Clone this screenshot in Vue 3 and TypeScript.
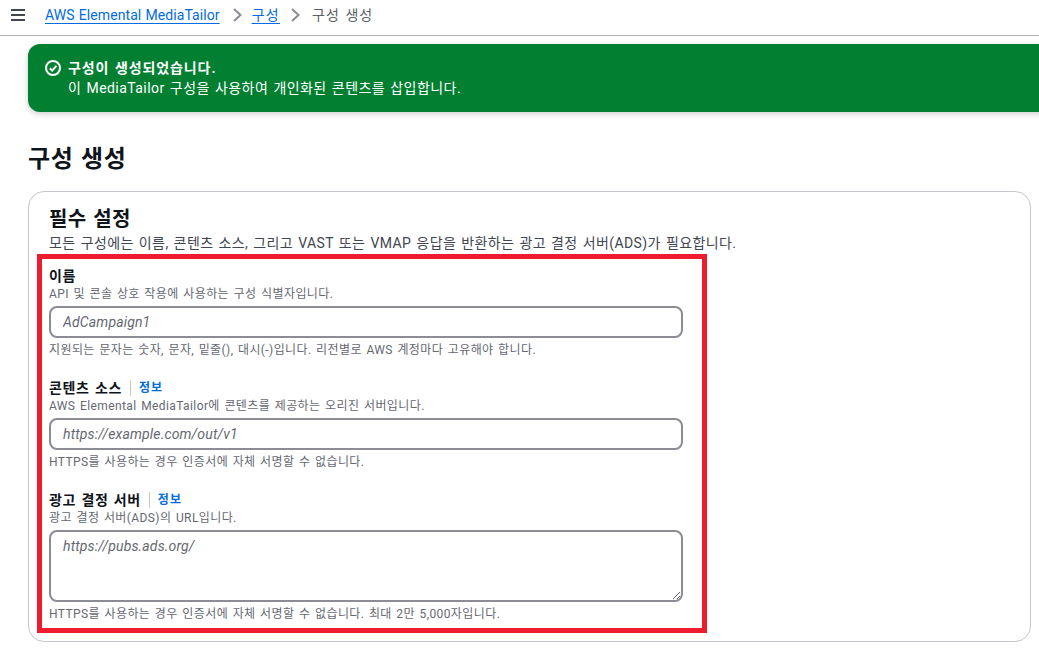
<script setup lang="ts">
interface Field {
  label: string
  info: boolean
  desc: string
  placeholder: string
  hint: string
  multiline: boolean
}

const fields: Field[] = [
  {
    label: '이름',
    info: false,
    desc: 'API 및 콘솔 상호 작용에 사용하는 구성 식별자입니다.',
    placeholder: 'AdCampaign1',
    hint: '지원되는 문자는 숫자, 문자, 밑줄(), 대시(-)입니다. 리전별로 AWS 계정마다 고유해야 합니다.',
    multiline: false,
  },
  {
    label: '콘텐츠 소스',
    info: true,
    desc: 'AWS Elemental MediaTailor에 콘텐츠를 제공하는 오리진 서버입니다.',
    placeholder: 'https://example.com/out/v1',
    hint: 'HTTPS를 사용하는 경우 인증서에 자체 서명할 수 없습니다.',
    multiline: false,
  },
  {
    label: '광고 결정 서버',
    info: true,
    desc: '광고 결정 서버(ADS)의 URL입니다.',
    placeholder: 'https://pubs.ads.org/',
    hint: 'HTTPS를 사용하는 경우 인증서에 자체 서명할 수 없습니다. 최대 2만 5,000자입니다.',
    multiline: true,
  },
]
</script>

<template>
  <div class="page">
    <header class="topbar">
      <button class="menu" type="button" aria-label="메뉴">
        <svg width="16" height="14" viewBox="0 0 16 14">
          <path d="M1 2h14M1 7h14M1 12h14" fill="none" stroke="#424650" stroke-width="2" />
        </svg>
      </button>
      <nav class="crumbs">
        <a class="crumb-link latin">AWS Elemental MediaTailor</a>
        <svg class="chev" width="12" height="14" viewBox="0 0 12 14">
          <path d="M3 1 9.5 7 3 13" fill="none" stroke="#8c8c94" stroke-width="2" />
        </svg>
        <a class="crumb-link">구성</a>
        <svg class="chev" width="12" height="14" viewBox="0 0 12 14">
          <path d="M3 1 9.5 7 3 13" fill="none" stroke="#8c8c94" stroke-width="2" />
        </svg>
        <span class="crumb-current">구성 생성</span>
      </nav>
    </header>

    <main class="content">
      <div class="flash">
        <svg class="flash-icon" width="16" height="16" viewBox="0 0 16 16">
          <circle cx="8" cy="8" r="7" fill="none" stroke="#fff" stroke-width="2" />
          <path d="M4.8 8.2 7.2 10.6 11.4 5.8" fill="none" stroke="#fff" stroke-width="2" />
        </svg>
        <div class="flash-text">
          <div class="flash-title">구성이 생성되었습니다.</div>
          <div class="flash-body">이 MediaTailor 구성을 사용하여 개인화된 콘텐츠를 삽입합니다.</div>
        </div>
      </div>

      <h1 class="title">구성 생성</h1>

      <section class="card">
        <h2 class="card-title">필수 설정</h2>
        <p class="card-desc">모든 구성에는 이름, 콘텐츠 소스, 그리고 VAST 또는 VMAP 응답을 반환하는 광고 결정 서버(ADS)가 필요합니다.</p>

        <div class="highlight">
          <div v-for="f in fields" :key="f.label" class="field">
            <div class="label-row">
              <span class="label">{{ f.label }}</span>
              <template v-if="f.info">
                <span class="divider"></span>
                <a class="info">정보</a>
              </template>
            </div>
            <div class="desc">{{ f.desc }}</div>
            <textarea v-if="f.multiline" class="control area" :placeholder="f.placeholder"></textarea>
            <input v-else class="control" type="text" :placeholder="f.placeholder" />
            <div class="hint">{{ f.hint }}</div>
          </div>
        </div>
      </section>
    </main>
  </div>
</template>

<style>
html,
body {
  margin: 0;
  background: #fff;
  overflow: hidden;
}
</style>

<style scoped>
.page {
  width: 1039px;
  height: 651px;
  overflow: hidden;
  background: #fff;
  color: #0f141a;
  font-family: Roboto, "Noto Sans CJK KR", sans-serif;
  font-size: 14px;
  line-height: 20px;
  letter-spacing: 0.4px;
  word-spacing: 1.2px;
}
.topbar {
  display: flex;
  align-items: center;
  height: 35px;
  border-bottom: 1px solid #b4b4bb;
  padding-left: 10px;
  box-sizing: content-box;
}
.menu {
  display: flex;
  width: 16px;
  height: 14px;
  padding: 0;
  border: 0;
  background: none;
  margin-bottom: 6px;
}
.crumbs {
  display: flex;
  align-items: center;
  margin-left: 19px;
  margin-bottom: 6px;
  gap: 8px;
}
.crumb-link {
  color: #006ce0;
  text-decoration: underline;
  text-underline-offset: 3px;
  letter-spacing: 1.3px;
}
.crumb-link.latin {
  letter-spacing: 0.08px;
  word-spacing: 0.6px;
  margin-right: 2px;
}
.crumb-current {
  color: #5b5f66;
  margin-left: 2px;
  letter-spacing: 1px;
}
.chev {
  margin: 0 1px;
}
.content {
  padding: 8px 0 0 28px;
}
.flash {
  display: flex;
  gap: 7px;
  width: 1030px;
  height: 68px;
  box-sizing: border-box;
  padding: 14px 17px;
  border-radius: 12px;
  background: #037f31;
  color: #fff;
  box-shadow: 0 2px 6px rgba(0, 7, 22, 0.2);
}
.flash-icon {
  margin-top: 2px;
  flex: none;
}
.flash-title {
  font-weight: 700;
  letter-spacing: 0.9px;
}
.flash-body {
  letter-spacing: 0.45px;
}
.title {
  margin: 32px 0 0;
  font-size: 24px;
  line-height: 30px;
  font-weight: 700;
  letter-spacing: 0.6px;
}
.card {
  width: 1003px;
  height: 451px;
  margin-top: 17px;
  box-sizing: border-box;
  padding: 14px 20px 0;
  border: 1px solid #c6c6cd;
  border-radius: 16px;
}
.card-title {
  margin: 0;
  font-size: 20px;
  line-height: 26px;
  font-weight: 700;
}
.card-desc {
  margin: 1px 0 0;
  height: 21px;
  color: #424650;
}
.highlight {
  width: 670px;
  box-sizing: border-box;
  margin-left: -12px;
  padding: 7px 19px 0 7px;
  height: 379px;
  border: 5px solid #ee1c2e;
}
.field + .field {
  margin-top: 20px;
}
.label-row {
  display: flex;
  align-items: center;
  height: 20px;
}
.label {
  font-weight: 700;
  color: #0f141a;
  letter-spacing: 0.65px;
}
.divider {
  width: 1px;
  height: 16px;
  background: #c6c6cd;
  margin: 0 8px;
}
.info {
  color: #006ce0;
  font-size: 12px;
  font-weight: 700;
  letter-spacing: 1px;
}
.desc,
.hint {
  font-size: 12px;
  line-height: 16px;
  color: #656871;
}
.control {
  display: block;
  width: 634px;
  height: 32px;
  margin-top: 4px;
  box-sizing: border-box;
  padding: 4px 12px;
  border: 2px solid #8c8c94;
  border-radius: 8px;
  background: #fff;
  color: #0f141a;
  font-family: inherit;
  font-size: 14px;
  line-height: 20px;
  letter-spacing: 0.15px;
  outline: none;
}
.area {
  height: 72px;
  resize: vertical;
}
.control::placeholder {
  color: #656871;
  font-style: italic;
  opacity: 1;
}
.hint {
  margin-top: 4px;
}
</style>
